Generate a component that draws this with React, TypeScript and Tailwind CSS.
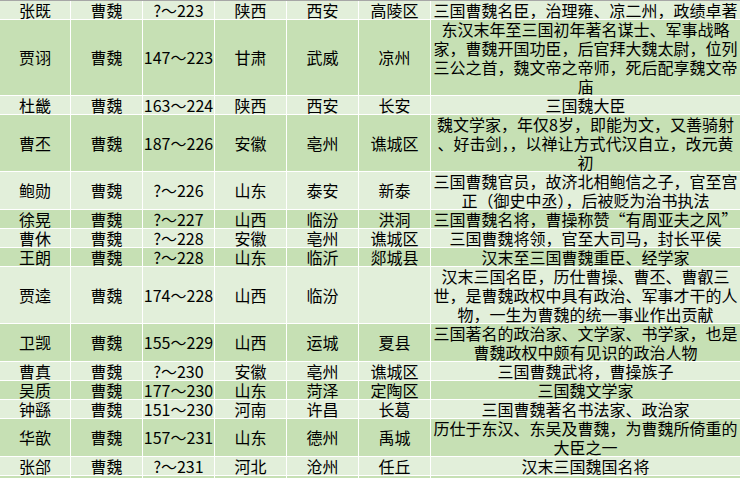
type Row = {
  name: string;
  years: string;
  prov: string;
  city: string;
  county: string;
  desc: string[];
  h: string;
};

const rows: Row[] = [
  { name: "张既", years: "?～223", prov: "陕西", city: "西安", county: "高陵区", desc: ["三国曹魏名臣，治理雍、凉二州，政绩卓著"], h: "h-[18px]" },
  {
    name: "贾诩",
    years: "147～223",
    prov: "甘肃",
    city: "武威",
    county: "凉州",
    desc: ["东汉末年至三国初年著名谋士、军事战略", "家，曹魏开国功臣，后官拜大魏太尉，位列", "三公之首，魏文帝之帝师，死后配享魏文帝", "庙"],
    h: "h-[75px]",
  },
  { name: "杜畿", years: "163～224", prov: "陕西", city: "西安", county: "长安", desc: ["三国魏大臣"], h: "h-[18px]" },
  {
    name: "曹丕",
    years: "187～226",
    prov: "安徽",
    city: "亳州",
    county: "谯城区",
    desc: ["魏文学家，年仅8岁，即能为文，又善骑射", "、好击剑，，以禅让方式代汉自立，改元黄", "初"],
    h: "h-[56px]",
  },
  {
    name: "鲍勋",
    years: "?～226",
    prov: "山东",
    city: "泰安",
    county: "新泰",
    desc: ["三国曹魏官员，故济北相鲍信之子，官至宫", "正（御史中丞），后被贬为治书执法"],
    h: "h-[37px]",
  },
  { name: "徐晃", years: "?～227", prov: "山西", city: "临汾", county: "洪洞", desc: ["三国曹魏名将，曹操称赞“有周亚夫之风”"], h: "h-[18px]" },
  { name: "曹休", years: "?～228", prov: "安徽", city: "亳州", county: "谯城区", desc: ["三国曹魏将领，官至大司马，封长平侯"], h: "h-[18px]" },
  { name: "王朗", years: "?～228", prov: "山东", city: "临沂", county: "郯城县", desc: ["汉末至三国曹魏重臣、经学家"], h: "h-[18px]" },
  {
    name: "贾逵",
    years: "174～228",
    prov: "山西",
    city: "临汾",
    county: "",
    desc: ["汉末三国名臣，历仕曹操、曹丕、曹叡三", "世，是曹魏政权中具有政治、军事才干的人", "物，一生为曹魏的统一事业作出贡献"],
    h: "h-[56px]",
  },
  {
    name: "卫觊",
    years: "155～229",
    prov: "山西",
    city: "运城",
    county: "夏县",
    desc: ["三国著名的政治家、文学家、书学家，也是", "曹魏政权中颇有见识的政治人物"],
    h: "h-[37px]",
  },
  { name: "曹真", years: "?～230", prov: "安徽", city: "亳州", county: "谯城区", desc: ["三国曹魏武将，曹操族子"], h: "h-[18px]" },
  { name: "吴质", years: "177～230", prov: "山东", city: "菏泽", county: "定陶区", desc: ["三国魏文学家"], h: "h-[18px]" },
  { name: "钟繇", years: "151～230", prov: "河南", city: "许昌", county: "长葛", desc: ["三国曹魏著名书法家、政治家"], h: "h-[18px]" },
  {
    name: "华歆",
    years: "157～231",
    prov: "山东",
    city: "德州",
    county: "禹城",
    desc: ["历仕于东汉、东吴及曹魏，为曹魏所倚重的", "大臣之一"],
    h: "h-[37px]",
  },
  { name: "张郃", years: "?～231", prov: "河北", city: "沧州", county: "任丘", desc: ["汉末三国魏国名将"], h: "h-[18px]" },
  { name: "", years: "", prov: "", city: "", county: "", desc: [""], h: "h-[18px]" },
];

function Cell({ children }: { children?: React.ReactNode }) {
  return (
    <div className="flex flex-col items-center justify-center overflow-hidden text-center whitespace-nowrap">
      {children}
    </div>
  );
}

export default function App() {
  return (
    <div
      className="h-[478px] w-[740px] overflow-hidden border-t border-[#a6a6a6] bg-white text-[16px] leading-[19px] text-black"
      style={{ fontFamily: '"Noto Sans CJK SC", "Noto Sans", sans-serif' }}
    >
      <div className="flex flex-col gap-px">
        {rows.map((r, i) => (
          <div
            key={i}
            className={`grid shrink-0 grid-cols-[70px_71px_71px_71px_71px_71px_309px] gap-px ${r.h} ${
              i % 2 === 0 ? "[&>div]:bg-[#e2efda]" : "[&>div]:bg-[#c6e0b4]"
            }`}
          >
            <Cell>{r.name}</Cell>
            <Cell>{r.name ? "曹魏" : ""}</Cell>
            <Cell>{r.years}</Cell>
            <Cell>{r.prov}</Cell>
            <Cell>{r.city}</Cell>
            <Cell>{r.county}</Cell>
            <Cell>
              {r.desc.map((line, j) => (
                <span key={j} className="block">
                  {line}
                </span>
              ))}
            </Cell>
          </div>
        ))}
      </div>
    </div>
  );
}
